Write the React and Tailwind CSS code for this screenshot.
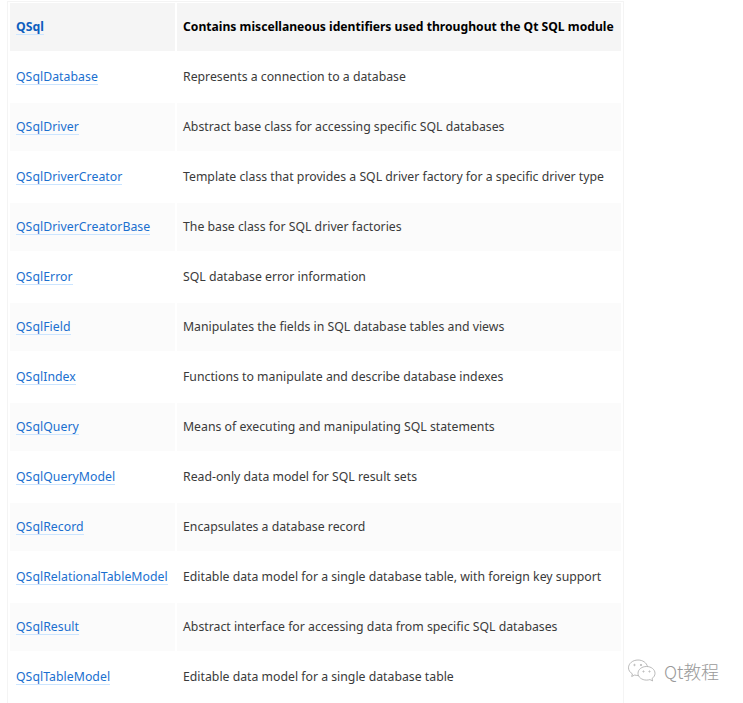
const rows = [
  ["QSqlDatabase", "Represents a connection to a database"],
  ["QSqlDriver", "Abstract base class for accessing specific SQL databases"],
  ["QSqlDriverCreator", "Template class that provides a SQL driver factory for a specific driver type"],
  ["QSqlDriverCreatorBase", "The base class for SQL driver factories"],
  ["QSqlError", "SQL database error information"],
  ["QSqlField", "Manipulates the fields in SQL database tables and views"],
  ["QSqlIndex", "Functions to manipulate and describe database indexes"],
  ["QSqlQuery", "Means of executing and manipulating SQL statements"],
  ["QSqlQueryModel", "Read-only data model for SQL result sets"],
  ["QSqlRecord", "Encapsulates a database record"],
  ["QSqlRelationalTableModel", "Editable data model for a single database table, with foreign key support"],
  ["QSqlResult", "Abstract interface for accessing data from specific SQL databases"],
  ["QSqlTableModel", "Editable data model for a single database table"],
];

function Row({ name, desc, index }) {
  const bg = index % 2 === 0 ? "bg-white" : "bg-[#fbfbfb]";
  return (
    <>
      <div className={`flex h-12 items-center pl-[6px] ${bg}`}>
        <a className="border-b border-[#cce5ff] leading-[15px] tracking-[0.04px] text-[#1a6fcf]">{name}</a>
      </div>
      <div className={`flex h-12 items-center pl-[6px] whitespace-nowrap text-[#3a3a3a] ${bg}`}>{desc}</div>
    </>
  );
}

export default function App() {
  return (
    <div className="h-[703px] w-[743px] overflow-hidden bg-white font-['Noto_Sans',sans-serif] text-[12.27px]">
      <div className="relative ml-[7px] mt-[1px] h-[702px] w-[617px] border-x border-t border-[#f4f4f4] px-[2px] pt-[1px]">
        <div className="grid grid-cols-[165px_444px] gap-[2px]">
          <div className="flex h-12 items-center bg-[#f5f5f5] pl-[6px]">
            <a className="border-b border-[#cce5ff] font-bold leading-[15px] text-[#0f5fbf]">QSql</a>
          </div>
          <div className="flex h-12 items-center whitespace-nowrap bg-[#f5f5f5] pl-[6px] text-[12.15px] font-bold text-black">
            Contains miscellaneous identifiers used throughout the Qt SQL module
          </div>
          {rows.map((row, i) => (
            <Row key={row[0]} name={row[0]} desc={row[1]} index={i} />
          ))}
        </div>
      </div>
      <div className="absolute left-[626px] top-[657px] flex items-center gap-[6px] text-[#9a9a9a]">
        <svg width="32" height="28" viewBox="0 0 32 28" fill="none" stroke="#a8a8a8" strokeWidth="0.8">
          <path d="M12 18.5c-1.2 0-2.300-.2-3.300-.5l-3 1.500.7-2.600C3.900 15.400 2.500 13.200 2.500 10.800 2.500 6.500 6.700 3 12 3c4.700 0 8.700 2.800 9.400 6.500" />
          <path d="M20.500 9.500c4.700 0 8.500 3 8.500 6.800 0 2.100-1.200 4-3 5.300l.6 2.300-2.700-1.300c-1 .3-2.200.5-3.400.5-4.700 0-8.500-3-8.500-6.800s3.800-6.800 8.500-6.800z" />
          <circle cx="8.500" cy="8" r="0.7" />
          <circle cx="15" cy="8" r="0.7" />
          <circle cx="17.500" cy="14.500" r="0.6" />
          <circle cx="23.500" cy="14.500" r="0.6" />
        </svg>
        <span className="font-['Noto_Sans_CJK_SC',sans-serif] text-[18px] font-light leading-none tracking-[-0.1px]">Qt教程</span>
      </div>
    </div>
  );
}
